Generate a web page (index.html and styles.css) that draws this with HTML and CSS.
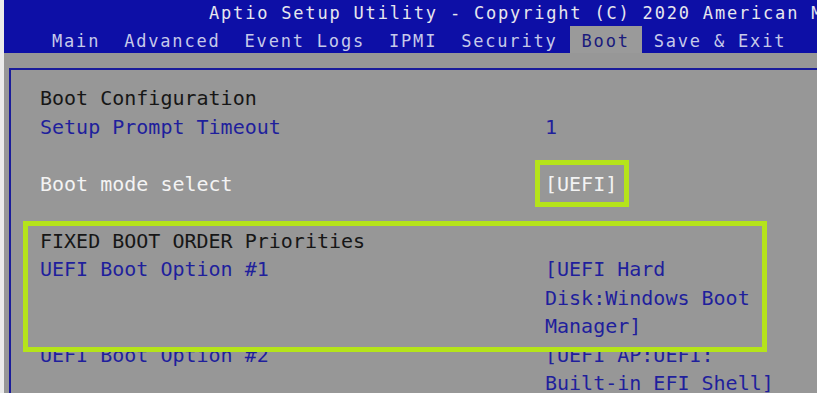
FILE: index.html
```html
<!DOCTYPE html>
<html lang="en">
  <head>
    <meta charset="UTF-8" />
    <meta name="viewport" content="width=device-width, initial-scale=1.0" />
    <title>Aptio Setup Utility - Boot</title>
    <link rel="stylesheet" href="styles.css">
  </head>
  <body>
    <div class="screen">
      <header class="top">
        <div class="title">Aptio Setup Utility - Copyright (C) 2020 American Megatrends, Inc.</div>
        <nav class="menu">
          <span class="tab">Main</span>
          <span class="tab">Advanced</span>
          <span class="tab">Event Logs</span>
          <span class="tab">IPMI</span>
          <span class="tab">Security</span>
          <span class="tab active">Boot</span>
          <span class="tab">Save &amp; Exit</span>
        </nav>
      </header>
      <div class="gap"></div>
      <main class="panel">
        <div class="rows">
          <div class="label head">Boot Configuration</div><div></div>
          <div class="label">Setup Prompt Timeout</div><div class="value">1</div>
          <div class="blank"></div><div></div>
          <div class="label white">Boot mode select</div><div class="value white">[UEFI]</div>
          <div class="blank"></div><div></div>
          <div class="label head">FIXED BOOT ORDER Priorities</div><div></div>
          <div class="label">UEFI Boot Option #1</div><div class="value">[UEFI Hard Disk:Windows Boot Manager]</div>
          <div class="label">UEFI Boot Option #2</div><div class="value">[UEFI AP:UEFI: Built-in EFI Shell]</div>
        </div>
        <div class="mark mark-mode"></div>
        <div class="mark mark-order"></div>
      </main>
    </div>
  </body>
</html>
```

FILE: styles.css
```css
html,
body {
  margin: 0;
  height: 100%;
  overflow: hidden;
}
body {
  background-color: #ebebeb;
  font-family: "DejaVu Sans Mono", "Liberation Mono", monospace;
  display: flex;
}
.screen {
  flex: 1;
  min-width: 0;
  margin-left: 4px;
  background-color: #979797;
  display: flex;
  flex-direction: column;
  white-space: nowrap;
  overflow: hidden;
}
.top {
  flex-shrink: 0;
  background-color: #0d0fa6;
  font-size: 17px;
  letter-spacing: 1.81px;
}
.title {
  height: 26px;
  line-height: 26px;
  padding-left: 205px;
  color: #e6e6ee;
  overflow: hidden;
}
.menu {
  display: flex;
  height: 27px;
  padding-left: 36px;
}
.tab {
  padding: 4px 12px 0;
  line-height: 23px;
  color: #c6c9ea;
}
.tab.active {
  background-color: #9a9a9a;
  color: #1b1b7c;
}
.gap {
  flex-shrink: 0;
  height: 15px;
}
.panel {
  position: relative;
  flex: 1 0 auto;
  margin-left: 5px;
  border-top: 2px solid #1a1c9a;
  border-left: 2px solid #1a1c9a;
  padding: 14px 0 0 29px;
  font-size: 20px;
}
.rows {
  display: grid;
  grid-template-columns: 505px 232px;
  line-height: 28.5px;
  color: #1f1f9c;
}
.blank {
  height: 28.5px;
}
.value {
  white-space: normal;
}
.head {
  color: #161616;
}
.white {
  color: #f3f3f3;
}
.mark {
  position: absolute;
  box-sizing: border-box;
  border: 5px solid #b5e41a;
}
.mark-mode {
  left: 524px;
  top: 90px;
  width: 94px;
  height: 47px;
}
.mark-order {
  left: 12px;
  top: 151px;
  width: 744px;
  height: 131px;
}
```
